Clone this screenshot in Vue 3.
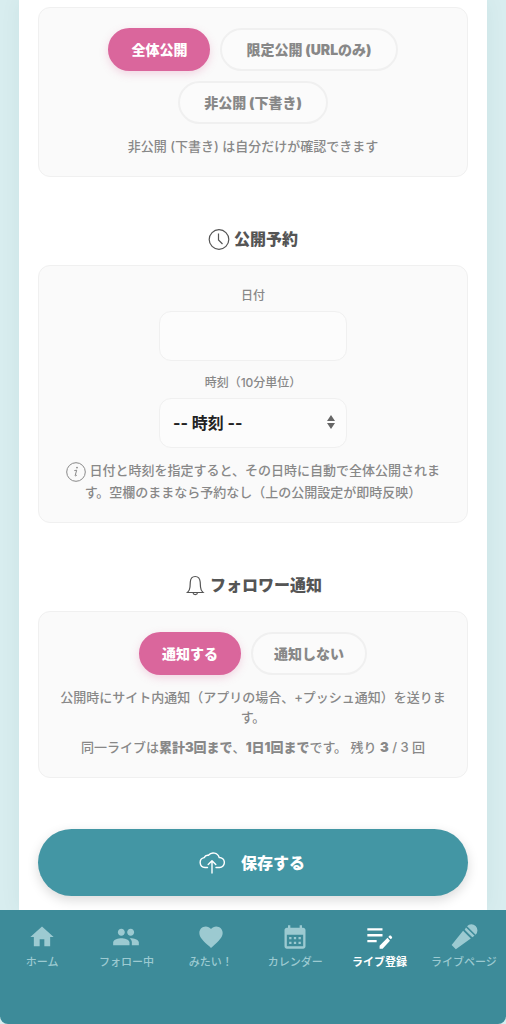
<script setup>
import { ref } from 'vue'

const visibility = ref('public')
const notify = ref('on')
const date = ref('')
const time = ref('')

const visibilityOptions = [
  { value: 'public', label: '全体公開' },
  { value: 'limited', label: '限定公開 (URLのみ)', wide: true },
  { value: 'draft', label: '非公開 (下書き)', wide: true },
]

const notifyOptions = [
  { value: 'on', label: '通知する' },
  { value: 'off', label: '通知しない' },
]

const times = Array.from({ length: 144 }, (_, i) => {
  const h = String(Math.floor(i / 6)).padStart(2, '0')
  const m = String((i % 6) * 10).padStart(2, '0')
  return `${h}:${m}`
})

const navItems = [
  { label: 'ホーム', path: 'M10 20v-6h4v6h5v-8h3L12 3 2 12h3v8z' },
  {
    label: 'フォロー中',
    path: 'M16 11c1.66 0 2.99-1.34 2.99-3S17.66 5 16 5c-1.66 0-3 1.34-3 3s1.34 3 3 3zm-8 0c1.66 0 2.99-1.34 2.99-3S9.66 5 8 5C6.34 5 5 6.34 5 8s1.34 3 3 3zm0 2c-2.33 0-7 1.17-7 3.5V19h14v-2.5c0-2.33-4.67-3.5-7-3.5zm8 0c-.29 0-.62.02-.97.05 1.16.84 1.97 1.97 1.97 3.45V19h6v-2.5c0-2.33-4.67-3.5-7-3.5z',
  },
  {
    label: 'みたい！',
    path: 'M12 21.35l-1.45-1.32C5.4 15.36 2 12.28 2 8.5 2 5.42 4.42 3 7.5 3c1.74 0 3.41.81 4.5 2.09C13.09 3.81 14.76 3 16.5 3 19.58 3 22 5.42 22 8.5c0 3.78-3.4 6.86-8.55 11.54L12 21.35z',
  },
  {
    label: 'カレンダー',
    path: 'M19 4h-1V2h-2v2H8V2H6v2H5c-1.11 0-1.99.9-1.99 2L3 20c0 1.1.89 2 2 2h14c1.1 0 2-.9 2-2V6c0-1.1-.9-2-2-2zm0 16H5V10h14v10zM9 14H7v-2h2v2zm4 0h-2v-2h2v2zm4 0h-2v-2h2v2zm-8 4H7v-2h2v2zm4 0h-2v-2h2v2zm4 0h-2v-2h2v2z',
  },
  {
    label: 'ライブ登録',
    active: true,
    path: 'M2 9.500h13v2H2v-2zm0-5v2h13v-2H2zm0 12h8v-2H2v2zm18-4.600.9-.9c.4-.4 1-.4 1.400 0l.7.700c.4.400.4 1 0 1.400l-.9.900-2.100-2.100zm-.7.700-6.800 6.800V22h2.600l6.300-6.800-2.100-2.600z',
  },
  {
    label: 'ライブページ',
    path: 'M14.600 2.700a4.800 4.800 0 0 1 7.400 7.300zM13.700 3.800l7.300 7.200-1.900 1.200-6.500-6.500zM11.200 6.700l6.600 6.600L5 22.500l-3.600-3.700z',
  },
]
</script>

<template>
  <div class="page">
    <main class="panel">
      <section class="card">
        <div class="chips">
          <button
            v-for="option in visibilityOptions"
            :key="option.value"
            type="button"
            class="chip"
            :class="{ 'chip--active': visibility === option.value, 'chip--wide': option.wide }"
            @click="visibility = option.value"
          >
            {{ option.label }}
          </button>
        </div>
        <p class="hint">非公開 (下書き) は自分だけが確認できます</p>
      </section>

      <h2 class="heading">
        <svg class="heading__icon" viewBox="0 0 22 22">
          <circle cx="11" cy="11.500" r="9.800" />
          <path d="M10.500 5.500V12l4 4" />
        </svg>
        公開予約
      </h2>
      <section class="card">
        <div class="field">
          <label class="field__label" for="date">日付</label>
          <input id="date" v-model="date" class="field__control" type="text">
        </div>
        <div class="field">
          <label class="field__label" for="time">時刻（10分単位）</label>
          <div class="select">
            <select id="time" v-model="time" class="field__control">
              <option value="">-- 時刻 --</option>
              <option v-for="t in times" :key="t" :value="t">{{ t }}</option>
            </select>
            <svg class="select__arrows" viewBox="0 0 8 14">
              <path d="M4 0l4 6H0zM4 14l4-6H0z" />
            </svg>
          </div>
        </div>
        <p class="hint">
          <svg class="hint__icon" viewBox="0 0 20 20">
            <circle cx="10" cy="10" r="9.300" />
            <path d="M8.300 8.600l2.400-.4-1.500 5.200c-.2.900.8.700 1.600-.3" />
            <circle class="hint__dot" cx="11" cy="5.600" r=".9" />
          </svg>
          日付と時刻を指定すると、その日時に自動で全体公開されます。空欄のままなら予約なし（上の公開設定が即時反映）
        </p>
      </section>

      <h2 class="heading">
        <svg class="heading__icon" viewBox="0 0 22 22">
          <path d="M3.500 18.500h15.500c-1.500-1.300-2.300-2.800-2.500-5.500l-.3-5C15.900 4.500 14.300 2.500 11.200 2.500S6.500 4.500 6.300 8l-.3 5c-.2 2.700-1 4.200-2.500 5.500zM9 18.800c.3 2.500 4.200 2.500 4.500 0" />
        </svg>
        フォロワー通知
      </h2>
      <section class="card">
        <div class="chips">
          <button
            v-for="option in notifyOptions"
            :key="option.value"
            type="button"
            class="chip"
            :class="{ 'chip--active': notify === option.value }"
            @click="notify = option.value"
          >
            {{ option.label }}
          </button>
        </div>
        <p class="hint">公開時にサイト内通知（アプリの場合、+プッシュ通知）を送ります。</p>
        <p class="hint hint--sub">
          同一ライブは<strong>累計3回まで</strong>、<strong>1日1回まで</strong>です。 残り <strong>3</strong> / 3 回
        </p>
      </section>

      <button type="button" class="save">
        <svg class="save__icon" viewBox="0 0 26 26">
          <path d="M8.500 18.500H6a5 5 0 0 1-.8-9.900 4 4 0 0 1 4.200-2.300 6.200 6.200 0 0 1 10.800 2.200 5 5 0 0 1 .3 10h-3.500M13 24V12M9.200 15.500L13 11.700l3.800 3.800" />
        </svg>
        保存する
      </button>
    </main>

    <nav class="nav">
      <a
        v-for="item in navItems"
        :key="item.label"
        href="#"
        class="nav__item"
        :class="{ 'nav__item--active': item.active }"
      >
        <svg class="nav__icon" viewBox="0 0 24 24"><path :d="item.path" /></svg>
        <span>{{ item.label }}</span>
      </a>
    </nav>
  </div>
</template>

<style>
body {
  margin: 0;
  background: #d8edef;
}
</style>

<style scoped>
.page {
  display: flex;
  flex-direction: column;
  min-height: 100vh;
  background: #d8edef;
  color: #555;
  font-family: Inter, 'Noto Sans CJK JP', sans-serif;
}

.panel {
  flex: 1;
  margin: 0 19px;
  padding: 7px 19px 14px;
  background: #fff;
  box-shadow: 0 0 20px rgba(0, 80, 90, 0.06);
}

.card {
  padding: 20px;
  border: 1px solid #f0f0f0;
  border-radius: 12px;
  background: #fafafa;
  text-align: center;
}

.chips {
  display: flex;
  flex-wrap: wrap;
  justify-content: center;
  gap: 10px;
}

.chip {
  height: 43px;
  padding: 0 21px 2px;
  border: 2px solid #f0f0f0;
  border-radius: 22px;
  background: #fbfbfb;
  color: #888;
  font: inherit;
  font-size: 14px;
  font-weight: 900;
  cursor: pointer;
}

.chip--wide {
  padding-right: 24px;
  padding-left: 24px;
}

.chip--active {
  border-color: #da669c;
  background: #da669c;
  color: #fff;
  box-shadow: 0 3px 8px rgba(218, 102, 156, 0.25);
}

.hint {
  margin: 12px 0 0;
  color: #888;
  font-size: 13px;
  font-weight: 500;
  line-height: 20px;
}

.hint--sub {
  margin-top: 10px;
}

.hint strong {
  font-weight: 900;
}

.hint__icon {
  width: 20px;
  height: 20px;
  vertical-align: -7px;
  fill: none;
  stroke: #888;
  stroke-width: 1;
}

.hint__dot {
  fill: #888;
  stroke: none;
}

.heading {
  display: flex;
  align-items: center;
  justify-content: center;
  gap: 4px;
  margin: 50px 0 14px;
  color: #555;
  font-size: 16px;
  font-weight: 900;
  line-height: 24px;
}

.heading__icon {
  width: 22px;
  height: 22px;
  fill: none;
  stroke: #555;
  stroke-width: 1.2;
}

.field {
  display: flex;
  flex-direction: column;
  align-items: center;
  gap: 6px;
}

.field + .field {
  margin-top: 12px;
}

.field__label {
  padding-top: 1px;
  color: #888;
  font-size: 12px;
  font-weight: 500;
  line-height: 18px;
}

.field__control {
  box-sizing: border-box;
  width: 188px;
  height: 50px;
  padding: 0 13px;
  border: 1px solid #f0f0f0;
  border-radius: 12px;
  background: #fcfcfc;
  color: #222;
  font: inherit;
  font-size: 16px;
  font-weight: 700;
  appearance: none;
}

.select {
  position: relative;
  display: flex;
}

.select__arrows {
  position: absolute;
  top: 17px;
  right: 12px;
  width: 8px;
  height: 14px;
  fill: #666;
  pointer-events: none;
}

.save {
  display: flex;
  align-items: center;
  justify-content: center;
  gap: 16px;
  width: 100%;
  height: 67px;
  margin-top: 51px;
  padding: 0 8px 2px 6px;
  border: 0;
  border-radius: 34px;
  background: #4396a4;
  color: #fff;
  font: inherit;
  font-size: 16px;
  font-weight: 900;
  box-shadow: 0 4px 12px rgba(0, 0, 0, 0.15);
  cursor: pointer;
}

.save__icon {
  width: 26px;
  height: 26px;
  fill: none;
  stroke: #fff;
  stroke-width: 1.4;
  stroke-linecap: round;
  stroke-linejoin: round;
}

.nav {
  position: relative;
  display: grid;
  grid-template-columns: repeat(6, 1fr);
  box-sizing: border-box;
  height: 114px;
  padding-top: 13px;
  border-radius: 0 0 8px 8px;
  background: #3d8b99;
}

.nav__item {
  display: flex;
  flex-direction: column;
  align-items: center;
  gap: 3px;
  color: #9ccad1;
  font-size: 11px;
  font-weight: 500;
  line-height: 16px;
  text-decoration: none;
  white-space: nowrap;
}

.nav__item--active {
  color: #fff;
  font-weight: 700;
}

.nav__icon {
  width: 28px;
  height: 28px;
  fill: currentColor;
}
</style>
